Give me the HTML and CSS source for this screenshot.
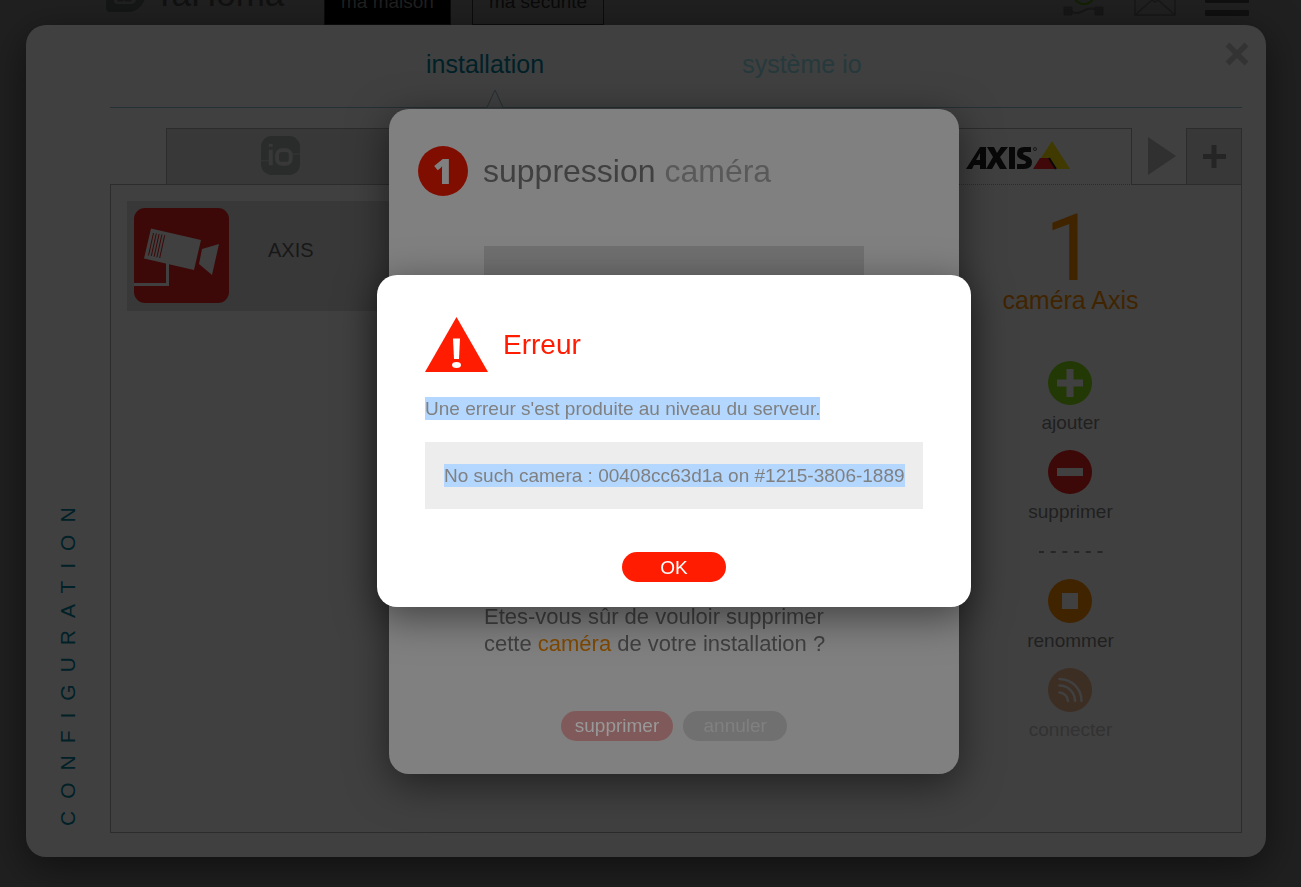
FILE: index.html
```html
<!DOCTYPE html>
<html lang="fr">
<head>
<meta charset="utf-8">
<title>TaHoma – Configuration</title>
<link rel="stylesheet" href="styles.css">
</head>
<body>
<div class="page">
  <header class="topbar">
    <div class="brand">
      <svg class="brand-mark" width="40" height="48" viewBox="0 0 40 48"><path d="M0 8H22A18 20 0 0 1 22 48H4Q0 48 0 44Z" fill="#151717"/><path d="M9 20H30V35Q30 40 25 40H11Q8 40 8 37Z" fill="#202020"/><path d="M13 28v8h3l2-4 2 4h4v-8" fill="none" stroke="#151717" stroke-width="3"/></svg>
      <span class="brand-name">TaHoma</span>
    </div>
    <nav class="topnav">
      <a class="topnav-item is-active" href="#maison">ma maison</a>
      <a class="topnav-item" href="#securite">ma sécurité</a>
    </nav>
    <div class="tools">
      <svg width="42" height="30" viewBox="0 0 42 30" fill="none"><ellipse cx="21" cy="11" rx="9" ry="7" stroke="#122002" stroke-width="2"/><path d="M9 26C20 30 20 20 32 23" stroke="#171717" stroke-width="2"/><path d="M1 21h8v8H1zM32 21h8v8h-8z" fill="#171717" stroke="#171717"/></svg>
      <svg width="42" height="30" viewBox="0 0 42 30" fill="none" stroke="#171717" stroke-width="1.5"><path d="M1 2v27h40V2L21 16 1 2M1 29l17-15M41 29L24 14"/></svg>
      <svg width="44" height="30" viewBox="0 0 44 30" fill="#101010"><rect y="11" width="44" height="6" rx="1"/><rect y="24" width="44" height="6" rx="1"/></svg>
    </div>
  </header>

  <main class="panel">
    <h1 class="side-title">CONFIGURATION</h1>
    <div class="panel-body">
      <nav class="sections">
        <a class="section is-active" href="#installation">installation
          <svg class="section-mark" width="18" height="19" viewBox="0 0 18 19"><path d="M0 18.5H1L9 1L17 18.5H18" fill="#404040" stroke="#253034"/></svg>
        </a>
        <a class="section" href="#systeme">système io</a>
      </nav>
      <button class="close" aria-label="Fermer"><svg width="24" height="24" viewBox="0 0 24 24"><path d="M2.500 2.500L21.500 21.500M21.500 2.500L2.500 21.500" stroke="#333" stroke-width="5.500"/></svg></button>

      <div class="tabs">
        <button class="tab" aria-label="io">
          <svg width="39" height="39" viewBox="0 0 40 40"><rect width="40" height="40" rx="11" fill="#292c2b"/><g fill="none" stroke="#383838"><path d="M10 14V30" stroke-width="4"/><path d="M8 9.500H12" stroke-width="3"/><rect x="16.500" y="14.500" width="14" height="14" rx="5" stroke-width="4"/><path d="M0 25.500H9M31 18.500H40"/></g></svg>
        </button>
        <button class="tab is-active" aria-label="AXIS">
          <svg width="104" height="30" viewBox="0 0 104 30"><g fill="#080808"><path d="M0 28L14 6H20V28H14V24H8L6 28ZM10 19H14V12Z" fill-rule="evenodd"/><path d="M21 6H28L31 12L35 6H42L34 16L41 28H34L30 21L26 28H20L27 16Z"/><path d="M43 6H49V28H43Z"/><path d="M65 6V11H59Q57 11 57 13Q58 14 61 15Q66 17 66 21Q66 28 58 28H51V23H57Q60 23 60 21Q60 20 57 19Q51 17 51 13Q51 6 58 6Z"/></g><circle cx="69" cy="8" r="1.500" fill="none" stroke="#181818"/><path d="M86 0L104 28H91L84 17H75Z" fill="#403a00"/><path d="M74 17H83L90 28H67Z" fill="#400809"/><path d="M83 17L90 28" stroke="#080808" stroke-width="2"/></svg>
        </button>
        <button class="tab-next" aria-label="Suivant"><svg width="28" height="38" viewBox="0 0 28 38"><path d="M0 0L28 19L0 38Z" fill="#303030"/></svg></button>
        <button class="tab-add" aria-label="Ajouter un onglet"><svg width="24" height="24" viewBox="0 0 24 24"><path d="M12 0V23M1 11.500H24" stroke="#252525" stroke-width="5"/></svg></button>
      </div>

      <div class="board">
        <section class="devices">
          <div class="device">
            <svg width="95" height="95" viewBox="0 0 95 95"><rect width="95" height="95" rx="11" fill="#3c0908"/><g fill="#404040"><path d="M17 20.500L67 32L60 62L10 50.500ZM68 41L85 36L78 67L65 56Z"/><path d="M0 75H32V55H35V78H0Z"/></g><path d="M19.500 25L14.500 47.500M22.300 25.500L17.300 48M25.100 26L20.100 48.700M27.900 26.500L22.900 49.300M30.700 27.200L25.700 50" stroke="#3c0908"/></svg>
            <span class="device-name">AXIS</span>
          </div>
        </section>
        <aside class="actions">
          <div class="count"><span class="count-number">1</span><span class="count-label">caméra Axis</span></div>
          <button class="action"><svg width="44" height="44" viewBox="0 0 44 44"><circle cx="22" cy="22" r="22" fill="#223905"/><path d="M22 8V36M9 22H35" stroke="#404040" stroke-width="7"/></svg>ajouter</button>
          <button class="action"><svg width="44" height="44" viewBox="0 0 44 44"><circle cx="22" cy="22" r="22" fill="#3c0908"/><path d="M9 22H35" stroke="#404040" stroke-width="8"/></svg>supprimer</button>
          <svg class="divider" width="64" height="2" viewBox="0 0 64 2"><path d="M0 1H64" stroke="#262626" stroke-width="2" stroke-dasharray="5 6.700"/></svg>
          <button class="action"><svg width="44" height="44" viewBox="0 0 44 44"><circle cx="22" cy="22" r="22" fill="#402400"/><rect x="14" y="14" width="16" height="16" fill="#404040"/></svg>renommer</button>
          <button class="action is-disabled" disabled><svg width="44" height="44" viewBox="0 0 44 44"><circle cx="22" cy="22" r="22" fill="#3d2e24"/><g fill="none" stroke="#404040" stroke-width="2.500" stroke-linecap="round"><path d="M11.500 24.500A9 9 0 0 1 20 33M11.500 17.500A15.500 15.500 0 0 1 27 33M11.500 11A22 22 0 0 1 33.500 33"/></g></svg>connecter</button>
        </aside>
      </div>
    </div>
  </main>
</div>

<div class="layer">
  <section class="dialog" role="dialog" aria-labelledby="remove-title">
    <header class="dialog-head"><span class="step">1</span><h2 id="remove-title">suppression <span class="muted">caméra</span></h2></header>
    <div class="dialog-body">
      <div class="preview"></div>
      <p>Etes-vous sûr de vouloir supprimer<br>cette <span class="accent">caméra</span> de votre installation ?</p>
    </div>
    <footer class="dialog-foot">
      <button class="pill pill-danger" disabled>supprimer</button>
      <button class="pill pill-neutral" disabled>annuler</button>
    </footer>
  </section>
</div>

<div class="layer">
  <section class="alert" role="alertdialog" aria-labelledby="error-title">
    <header class="alert-head">
      <svg width="63" height="55" viewBox="0 0 63 55"><path d="M31.500 0L63 55H0Z" fill="#ff1c00"/><path d="M28 21.500H35L34 42H29Z" fill="#fff"/><ellipse cx="31.500" cy="48" rx="4.500" ry="3" fill="#fff"/></svg>
      <h2 id="error-title">Erreur</h2>
    </header>
    <p><span class="selected">Une erreur s'est produite au niveau du serveur.</span></p>
    <p class="detail"><span class="selected">No such camera : 00408cc63d1a on #1215-3806-1889</span></p>
    <button class="pill pill-ok">OK</button>
  </section>
</div>
</body>
</html>
```
FILE: styles.css
```css
* { box-sizing: border-box; }
body { margin: 0; background: #202020; color: #202020; font: 19px/22px "Liberation Sans", Arial, sans-serif; }
h1, h2, p { margin: 0; font-weight: normal; }
button { padding: 0; border: 0; background: none; color: inherit; font: inherit; }
a { color: inherit; text-decoration: none; }
svg { display: block; flex: none; }

.page { display: flex; flex-direction: column; min-height: 100vh; padding: 0 35px 30px 26px; overflow: hidden; }

.topbar { display: flex; align-items: flex-end; height: 25px; padding: 0 17px 0 80px; }
.brand { display: flex; align-items: flex-end; gap: 8px; width: 218px; padding-bottom: 13px; }
.brand-name { color: #111; font-size: 35px; line-height: 36px; }
.topnav { display: flex; gap: 21px; flex: 1; }
.topnav-item { padding: 10px 16px 11px; border: 1px solid #0c0c0c; color: #0a0a0a; }
.topnav-item.is-active { background: #000; color: #202020; }
.tools { display: flex; gap: 29px; padding-bottom: 9px; }

.panel { position: relative; display: flex; flex: 1; padding: 0 24px 24px 0; border-radius: 20px; background: #404040; box-shadow: 0 10px 40px rgba(0, 0, 0, .5); }
.side-title { width: 84px; padding: 7px 31px 0; color: #002127; font-size: 21px; line-height: 22px; letter-spacing: 12px; writing-mode: vertical-rl; transform: rotate(180deg); }
.panel-body { display: flex; flex: 1; flex-direction: column; min-width: 0; }
.close { position: absolute; top: 17px; right: 17px; }

.sections { display: flex; gap: 198px; height: 83px; padding: 24px 0 0 316px; border-bottom: 1px solid #253034; font-size: 25px; line-height: 30px; }
.section { color: #26393c; }
.section.is-active { position: relative; color: #002127; }
.section-mark { position: absolute; top: 40px; left: 60px; }

.tabs { display: grid; grid-template-columns: 1fr 1fr 54px 56px; height: 56px; margin: 20px 0 0 56px; }
.tab, .tab-next, .tab-add { display: flex; align-items: center; justify-content: center; }
.tab, .tab-add { border: 1px solid #2c2c2c; border-bottom: 0; background: #383838; }
.tab { padding: 0 254px 2px 0; }
.tab.is-active { z-index: 1; justify-content: flex-end; margin-bottom: -1px; padding-right: 61px; border-bottom: 1px dotted #2c2c2c; background: #404040; }
.tab-next { padding-left: 6px; }

.board { display: flex; flex: 1; border: 1px solid #2c2c2c; }
.devices { flex: 1; padding: 16px; }
.device { display: flex; align-items: center; gap: 39px; padding: 7px 7px 8px; background: #383838; }
.device-name { padding-bottom: 12px; font-size: 20px; color: #181818; }
.actions { display: flex; flex-direction: column; align-items: center; width: 341px; }
.count { display: flex; flex-direction: column; align-items: center; margin: 30px 0 46px; color: #402400; }
.count-number { font: 92px/68px Roboto, sans-serif; }
.count-label { margin-top: 2px; font-size: 25px; line-height: 30px; }
.action { display: flex; flex-direction: column; align-items: center; gap: 7px; margin-bottom: 16px; }
.action.is-disabled { color: #323232; }
.divider { margin: 12px 0 26px; }

.layer { position: fixed; inset: 0; z-index: 2; display: grid; place-items: center; pointer-events: none; }
.dialog, .alert { margin-right: -47px; border-radius: 20px; box-shadow: 0 10px 40px rgba(0, 0, 0, .5); pointer-events: auto; }
.dialog { width: 570px; margin-bottom: 4px; padding: 37px 29px 33px; background: #808080; color: #404040; }
.dialog-head { display: flex; align-items: center; gap: 15px; height: 50px; }
.dialog-head h2 { font-size: 32px; line-height: 36px; }
.muted { color: #595959; }
.step { width: 50px; border-radius: 50%; background: #800e00; color: #808080; font: 800 35px/50px "Open Sans", sans-serif; text-align: center; }
.dialog-body { padding: 50px 66px 54px; font-size: 22px; line-height: 27px; }
.preview { height: 340px; margin-bottom: 17px; background: #707070; }
.accent { color: #804900; }
.dialog-foot { display: flex; justify-content: center; gap: 10px; }
.pill { min-width: 104px; height: 30px; padding: 0 14px; border-radius: 15px; }
.pill-danger { background: #805a5a; color: #999; }
.pill-neutral { background: #707070; color: #808080; }

.alert { width: 594px; margin-bottom: 5px; padding: 42px 48px 25px; background: #fff; color: #808080; line-height: 23px; }
.alert-head { display: flex; align-items: center; gap: 15px; margin-bottom: 25px; color: #ff1c00; }
.alert-head h2 { font-size: 28px; line-height: 32px; }
.alert p { display: flex; }
.selected { background: #b3d7ff; white-space: nowrap; }
.alert .detail { margin: 22px 0 43px; padding: 22px 19px; background: #ededed; }
.pill-ok { display: block; margin: 0 auto; background: #ff1c00; color: #fff; }
```
